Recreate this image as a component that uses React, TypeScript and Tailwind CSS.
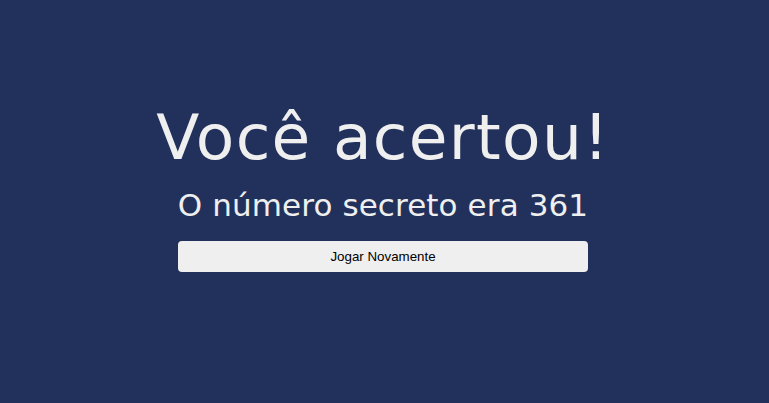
export default function App() {
  return (
    <div className="min-h-[403px] w-full bg-[#22315c] flex flex-col items-center pt-[106px] pr-[3px]">
      <h1 className="text-[#efefef] text-[63px] leading-none font-normal tracking-[1.3px] font-['DejaVu_Sans',sans-serif]">
        Você acertou!
      </h1>
      <p className="text-[#efefef] text-[31px] leading-none mt-[21px] tracking-[0.1px] font-['DejaVu_Sans',sans-serif]">
        O número secreto era 361
      </p>
      <button className="mt-[20px] w-[410px] h-[31px] bg-[#efefef] rounded-[4px] text-black text-[13.33px] font-['Liberation_Sans',Arial,sans-serif]">
        Jogar Novamente
      </button>
    </div>
  );
}
